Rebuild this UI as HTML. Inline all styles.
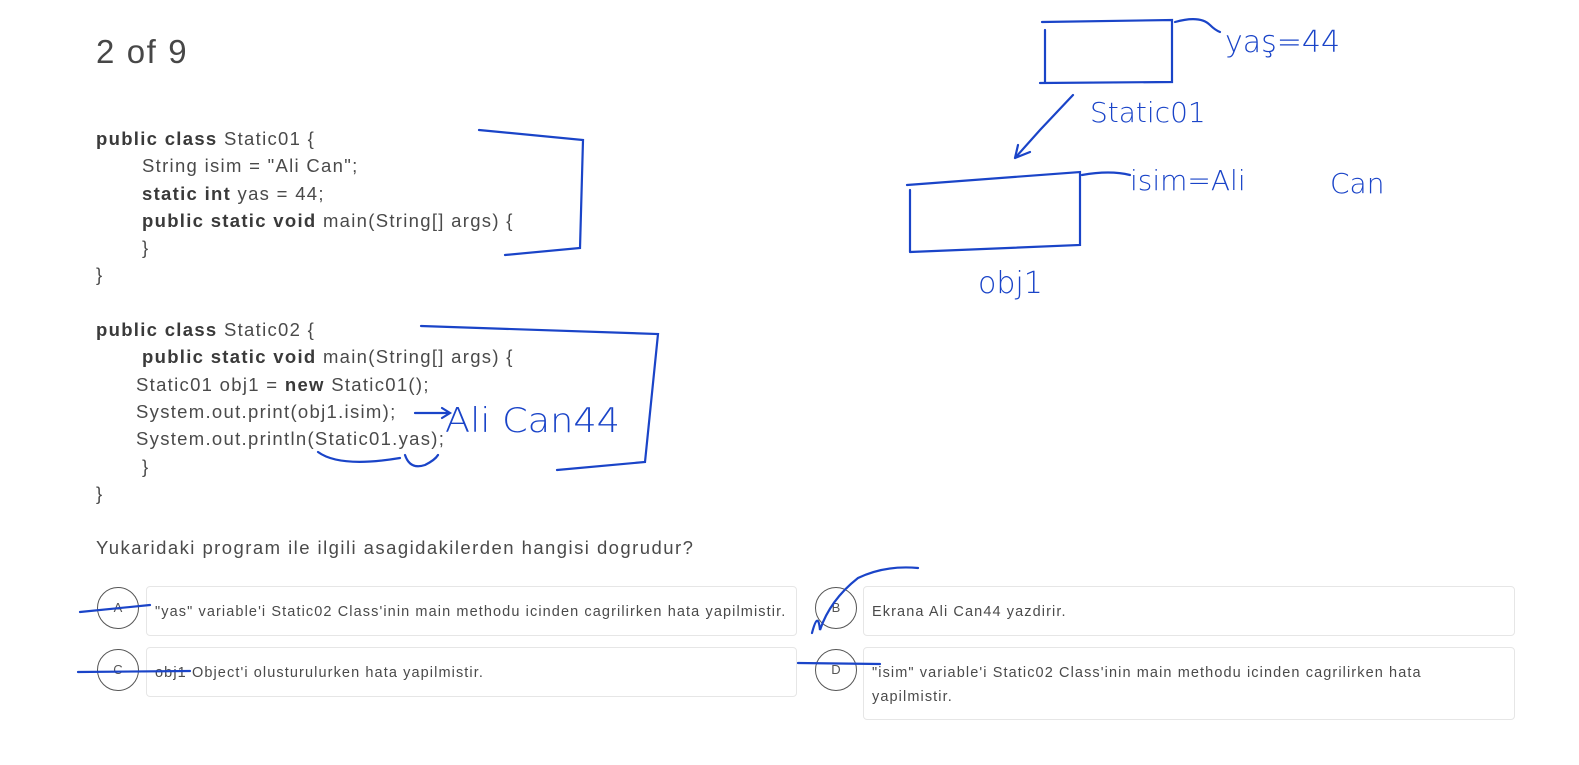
<!DOCTYPE html>
<html><head><meta charset="utf-8"><style>
body{margin:0;width:1579px;height:765px;background:#fff;position:relative;overflow:hidden;font-family:"Liberation Sans",sans-serif;color:#444}
.t{position:absolute;left:96px;top:33px;font-size:33px;letter-spacing:1.6px;color:#474747}
.code{position:absolute;left:96px;top:125px;font-size:18.5px;letter-spacing:1.3px;line-height:27.3px;color:#4a4a4a;white-space:pre}
.code div{height:27.3px}
.code b{color:#3a3a3a}
.i1{padding-left:46px}.i2{padding-left:40px}
.q{position:absolute;left:96px;top:537px;font-size:18.5px;letter-spacing:1.45px;color:#4a4a4a}
.box{position:absolute;border:1px solid #e6e6e6;border-radius:4px;font-size:14.5px;letter-spacing:1.1px;color:#4a4a4a;box-sizing:border-box;padding:0 8px;line-height:24px}
.c{position:absolute;width:42px;height:42px;border:1px solid #555;border-radius:50%;box-sizing:border-box;text-align:center;line-height:40px;font-size:13px;color:#555;background:#fff}
svg{position:absolute;left:0;top:0}
</style></head><body>
<div class="t">2 of 9</div>
<div class="code"><div><b>public class</b> Static01 {</div><div class="i1">String isim = "Ali Can";</div><div class="i1"><b>static int</b> yas = 44;</div><div class="i1"><b>public static void</b> main(String[] args) {</div><div class="i1">}</div><div>}</div><div></div><div><b>public class</b> Static02 {</div><div class="i1"><b>public static void</b> main(String[] args) {</div><div class="i2">Static01 obj1 = <b>new</b> Static01();</div><div class="i2">System.out.print(obj1.isim);</div><div class="i2">System.out.println(Static01.yas);</div><div class="i1">}</div><div>}</div></div>
<div class="q">Yukaridaki program ile ilgili asagidakilerden hangisi dogrudur?</div>
<div class="box" style="left:146px;top:586px;width:651px;height:50px;padding-top:13px">"yas" variable'i Static02 Class'inin main methodu icinden cagrilirken hata yapilmistir.</div>
<div class="box" style="left:863px;top:586px;width:652px;height:50px;padding-top:13px">Ekrana Ali Can44 yazdirir.</div>
<div class="box" style="left:146px;top:647px;width:651px;height:50px;padding-top:13px">obj1 Object'i olusturulurken hata yapilmistir.</div>
<div class="box" style="left:863px;top:647px;width:652px;height:73px;padding-top:13px">"isim" variable'i Static02 Class'inin main methodu icinden cagrilirken hata<br>yapilmistir.</div>
<div class="c" style="left:97px;top:587px">A</div>
<div class="c" style="left:815px;top:587px">B</div>
<div class="c" style="left:97px;top:649px">C</div>
<div class="c" style="left:815px;top:649px">D</div>
<svg width="1579" height="765" fill="none" stroke="#1a44c8" stroke-width="2.2" stroke-linecap="round">
<path d="M479 130 L583 140 L580 248 L505 255"/>
<path d="M421 326 L658 334 L645 462 L557 470"/>
<path d="M415 413 L450 413 M442 408 L450 413 L442 418"/>
<path d="M318 452 Q340 468 400 458 M405 455 Q410 470 425 465 Q435 460 438 455"/>
<path d="M80 612 L150 605"/><path d="M78 672 L190 671"/><path d="M798 663 L880 664"/>
<path d="M812 633 Q818 610 820 630 Q830 600 858 578 Q885 565 918 568"/>
<path d="M1042 22 L1172 20 L1172 82 L1040 83 M1045 30 L1045 83"/>
<path d="M1175 22 Q1200 15 1210 25 Q1215 30 1220 32"/>
<path d="M1073 95 L1040 130 L1015 158 M1015 158 L1030 152 M1015 158 L1018 145"/>
<path d="M907 185 L1080 172 L1080 245 L910 252 M910 190 L910 252"/>
<path d="M1082 175 Q1110 170 1130 175"/>
</svg>
<svg width="1579" height="765" font-family="'DejaVu Sans',sans-serif" fill="#1a44c8">
<text x="445" y="432" font-size="34" textLength="175" lengthAdjust="spacingAndGlyphs" font-weight="300">Ali Can44</text>
<text x="1225" y="52" font-size="30" font-weight="300">yaş=44</text>
<text x="1090" y="122" font-size="28" font-weight="300">Static01</text>
<text x="1130" y="190" font-size="28" font-weight="300">isim=Ali</text>
<text x="1330" y="193" font-size="28" font-weight="300">Can</text>
<text x="978" y="293" font-size="30" font-weight="300">obj1</text>
</svg>
</body></html>
